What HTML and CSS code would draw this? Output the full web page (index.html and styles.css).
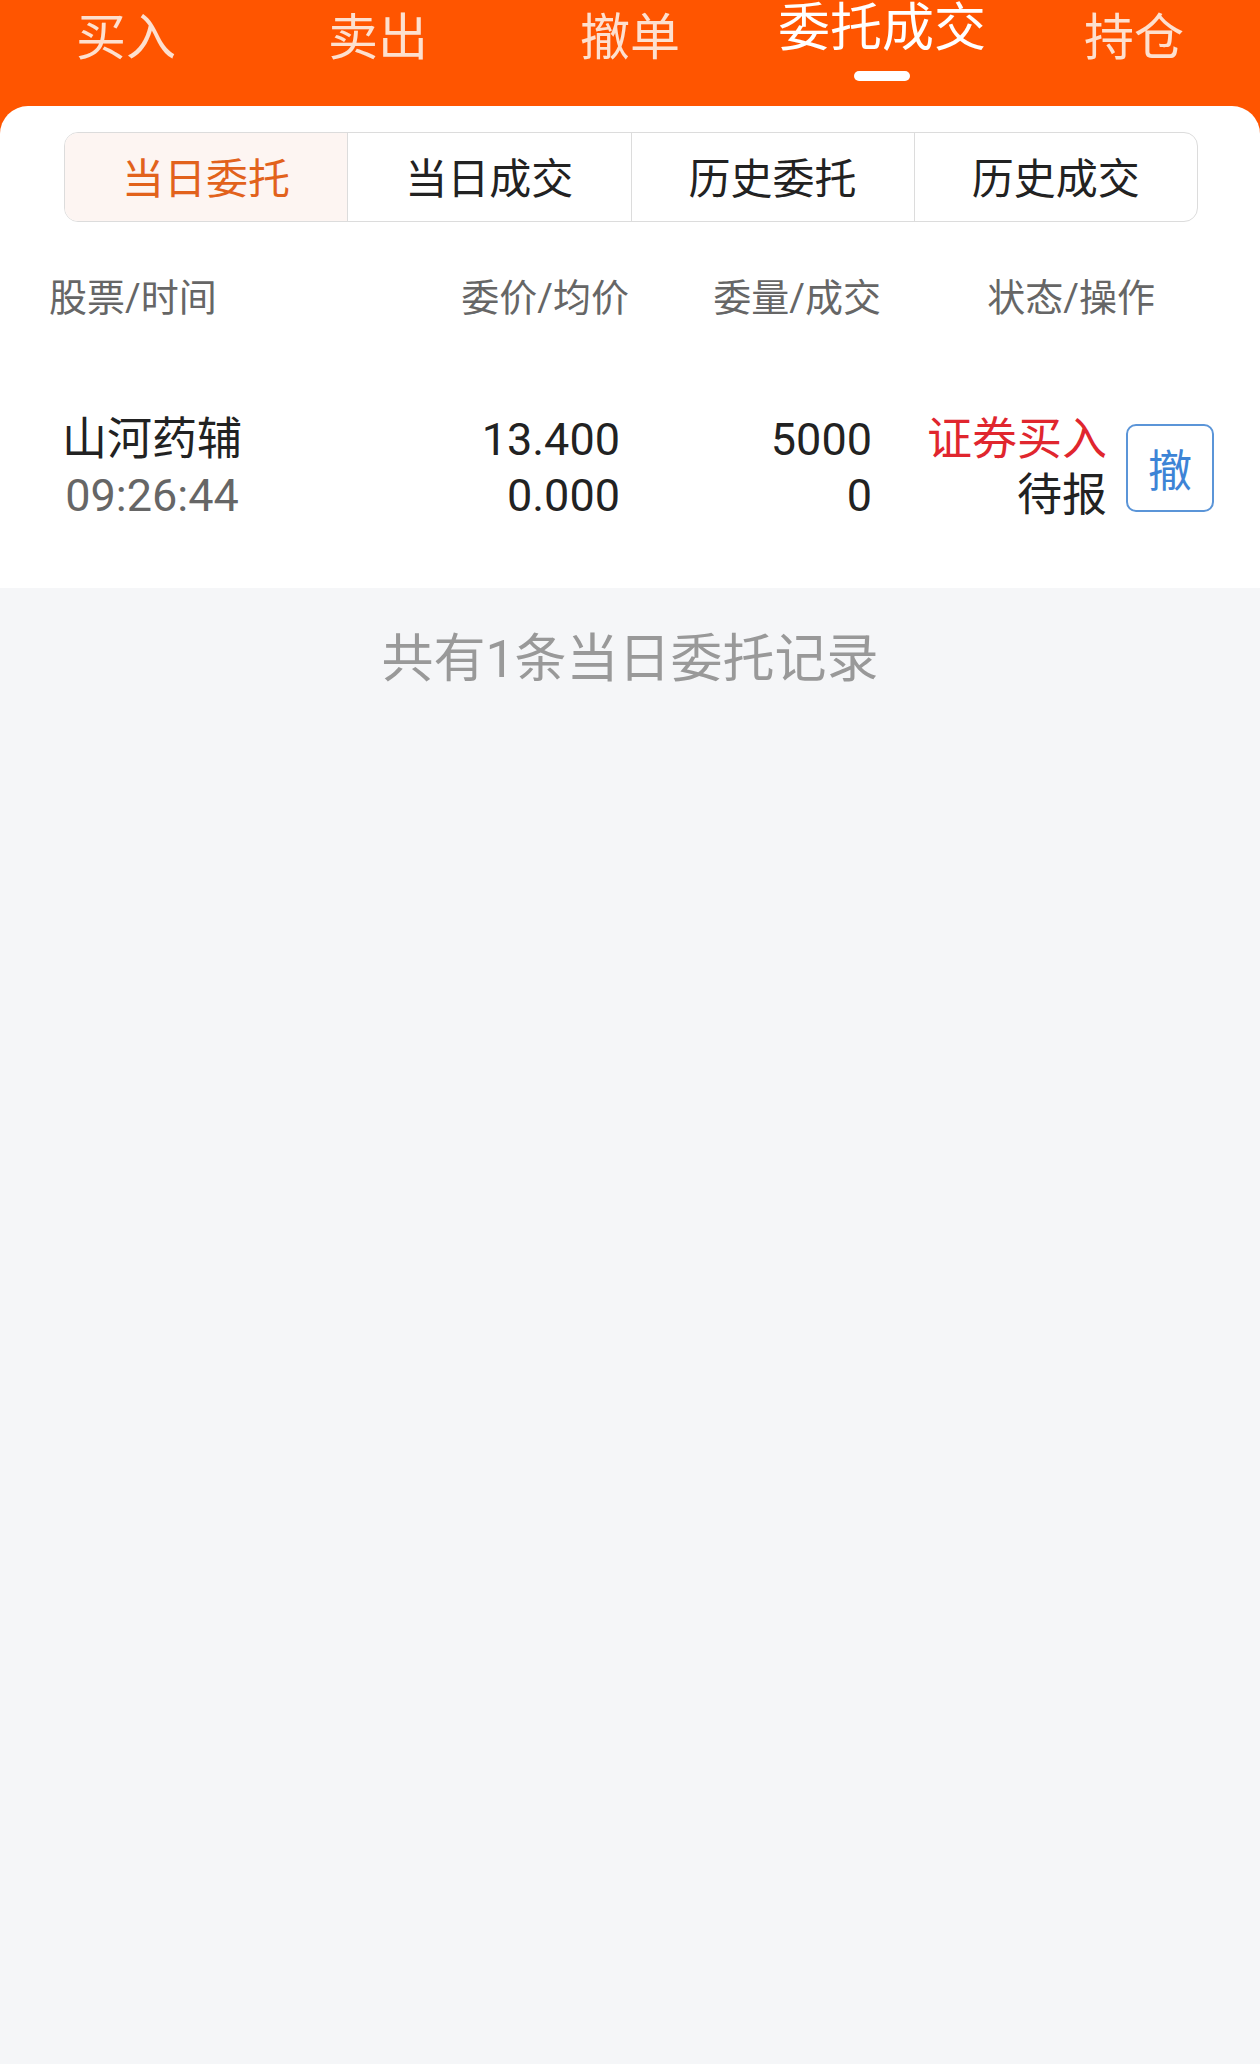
FILE: index.html
```html
<!DOCTYPE html>
<html lang="zh-CN">
<head>
  <meta charset="UTF-8">
  <title>委托成交</title>
  <link rel="stylesheet" href="styles.css">
</head>
<body>
  <div class="topbar">
    <div class="nav-item">买入</div>
    <div class="nav-item">卖出</div>
    <div class="nav-item">撤单</div>
    <div class="nav-item active">委托成交</div>
    <div class="nav-item">持仓</div>
  </div>

  <div class="panel">
    <div class="segments">
      <div class="seg active">当日委托</div>
      <div class="seg">当日成交</div>
      <div class="seg">历史委托</div>
      <div class="seg">历史成交</div>
    </div>

    <div class="thead">
      <div class="col-name">股票/时间</div>
      <div class="col-price">委价/均价</div>
      <div class="col-qty">委量/成交</div>
      <div class="col-status">状态/操作</div>
    </div>

    <div class="trow">
      <div class="col-name">
        <div class="stock">山河药辅</div>
        <div class="time">09:26:44</div>
      </div>
      <div class="col-price num">
        <div>13.400</div>
        <div>0.000</div>
      </div>
      <div class="col-qty num">
        <div>5000</div>
        <div>0</div>
      </div>
      <div class="col-status">
        <div class="status">
          <div class="buy">证券买入</div>
          <div>待报</div>
        </div>
        <button class="cancel">撤</button>
      </div>
    </div>
  </div>

  <div class="footer">共有1条当日委托记录</div>
</body>
</html>
```

FILE: styles.css
```css
body {
  margin: 0;
  background: #f5f6f8;
  font-family: Roboto, "Noto Sans CJK SC", sans-serif;
  color: #222;
}

.topbar {
  background: #ff5500;
  height: 134px;
  display: grid;
  grid-template-columns: repeat(5, 1fr);
}

.nav-item {
  position: relative;
  text-align: center;
  font-size: 50px;
  line-height: 50px;
  padding-top: 13px;
  color: #fde0cf;
}

.nav-item.active {
  color: #fff;
  font-size: 52px;
  line-height: 52px;
  padding-top: 3px;
}

.nav-item.active::after {
  content: "";
  position: absolute;
  left: 50%;
  top: 71px;
  width: 56px;
  height: 10px;
  margin-left: -28px;
  border-radius: 5px;
  background: #fff;
}

.panel {
  background: #fff;
  margin-top: -28px;
  border-radius: 28px 28px 0 0;
  padding: 26px 0 64px;
}

.segments {
  display: flex;
  margin: 0 62px 0 64px;
  height: 90px;
  border: 1px solid #dcdcdc;
  border-radius: 14px;
  overflow: hidden;
  box-sizing: border-box;
}

.seg {
  flex: 1;
  display: flex;
  align-items: center;
  justify-content: center;
  padding-bottom: 3px;
  font-size: 42px;
  color: #222;
  border-left: 1px solid #dcdcdc;
}

.seg:first-child {
  border-left: none;
}

.seg.active {
  background: #fdf5f2;
  color: #e2621c;
}

.thead, .trow {
  display: grid;
  grid-template-columns: 206px 374px 252px 333px;
  padding-left: 49px;
}

.thead {
  margin-top: 50px;
  font-size: 38px;
  line-height: 52px;
  color: #666;
}

.thead .col-price, .thead .col-qty {
  text-align: right;
}

.thead .col-status {
  text-align: right;
  padding-right: 59px;
}

.trow {
  margin-top: 88px;
  font-size: 45px;
  line-height: 56px;
}

.trow .col-name {
  text-align: center;
}

.time {
  color: #666;
}

.num {
  text-align: right;
  padding-right: 9px;
}

.trow .col-status {
  display: flex;
  align-items: center;
  justify-content: flex-end;
  gap: 19px;
}

.status {
  text-align: right;
}

.buy {
  color: #e0262e;
}

.cancel {
  width: 88px;
  height: 88px;
  padding: 0;
  border: 2px solid #5b95d8;
  border-radius: 10px;
  background: #fff;
  color: #3d84d6;
  font-family: "Noto Sans CJK SC", sans-serif;
  font-size: 44px;
}

.footer {
  text-align: center;
  font-size: 52px;
  line-height: 60px;
  padding-top: 42px;
  color: #999;
}
```
